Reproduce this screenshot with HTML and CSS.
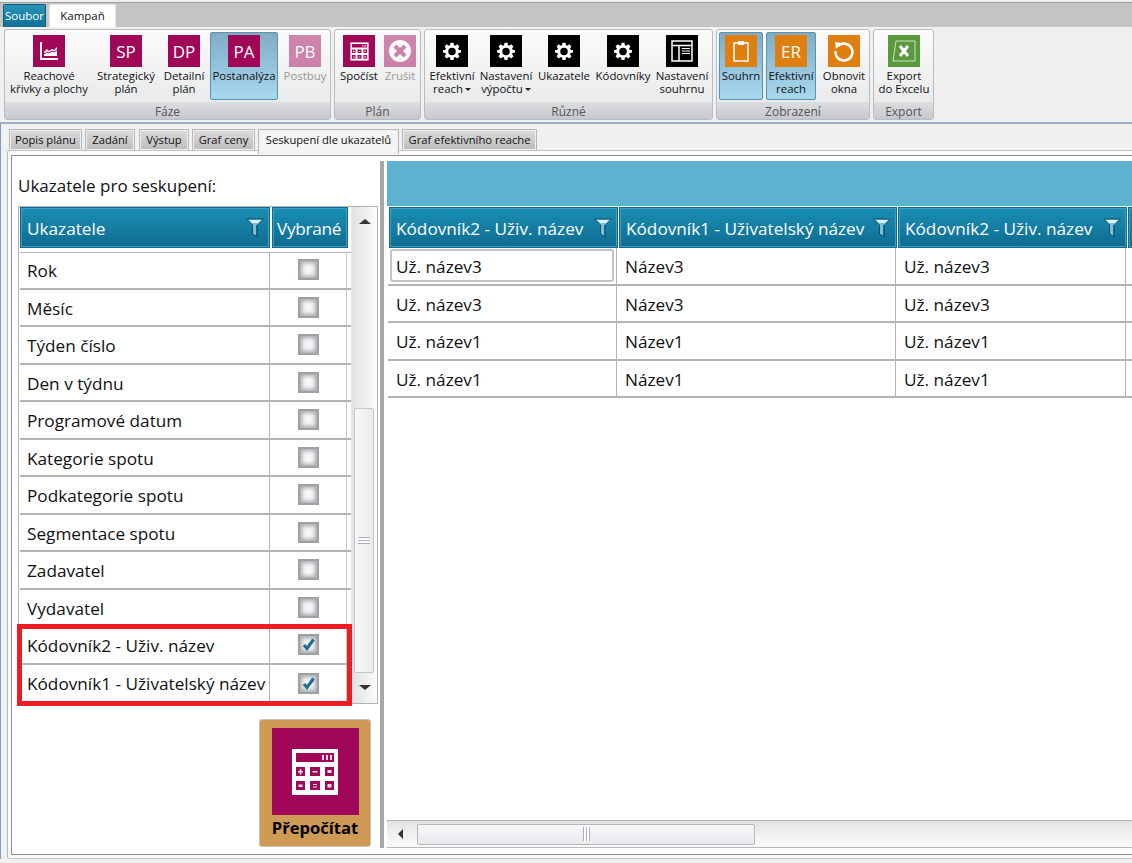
FILE: index.html
```html
<!DOCTYPE html>
<html lang="cs">
  <head>
    <meta charset="UTF-8" />
    <title>Seskupení dle ukazatelů</title>
    <link rel="stylesheet" href="styles.css">
  </head>
  <body>
    <svg class="defs" width="0" height="0">
      <symbol id="gear" viewBox="0 0 24 24">
        <path fill="#fff" fill-rule="evenodd" d="M10 1h4l.6 3.2 1.7.7L19 3l3 3-1.900 2.700.7 1.700L24 11v3l-3.200.6-.7 1.700L22 19l-3 3-2.700-1.900-1.700.7L14 24h-4l-.6-3.200-1.700-.7L5 22l-3-3 1.900-2.700-.7-1.700L0 14v-3l3.200-.6.7-1.700L2 6l3-3 2.700 1.900 1.700-.7zM12 7.500a5 5 0 1 0 0 10 5 5 0 0 0 0-10z"/>
      </symbol>
      <symbol id="funnel" viewBox="0 0 18 20">
        <path fill="#7cc0d4" stroke="#0b4f6c" d="M.5 1h17l-6 6v12l-5-3V7z"/>
        <path fill="#d8f4f8" d="M3 2h12l-3 3H6z"/>
        <path fill="#0f6b90" d="M10 7h1.500v11H10z"/>
      </symbol>
      <symbol id="calc" viewBox="0 0 48 48">
        <path fill="#fff" d="M1 1h46v46H1z"/>
        <path fill="#a10758" d="M5 5h38v9H5zM5 19h9v9H5zM19 19h10v9H19zM34 19h9v9h-9zM5 33h9v9H5zM19 33h10v9H19zM34 33h9v9h-9z"/>
        <path fill="#fff" d="M31 7h2v5h-2zM35 7h2v5h-2zM39 7h2v5h-2zM7 23h5v1.500H7zM8.700 21h1.600v5.500H8.700zM21.500 23h5v1.500h-5zM36.500 22h4v3h-4zM7.500 36.500h4v2.500h-4zM22 36h4v1h-4zM22 38.500h4v1h-4zM36.500 36h4v3.500h-4z" opacity=".85"/>
      </symbol>
    </svg>

    <div class="tabs-top">
      <div class="app-tab">Soubor</div>
      <div class="app-tab active">Kampaň</div>
    </div>

    <div class="ribbon">
      <section class="group group-faze">
        <div class="tools">
          <div class="tool w-reach">
            <span class="ico magenta">
              <svg width="18" height="18" viewBox="0 0 18 18"><path fill="none" stroke="#fff" stroke-width="2" d="M1 0v17h17"/><path fill="#fff" d="M4 10l3-3 2 2 3-2 2 1 3-3v9H4z"/><path fill="none" stroke="#a10758" d="M4 12l3-2 2 1 3-2 2 1 3-2"/></svg>
            </span>
            <span class="lbl">Reachové<br>křivky a plochy</span>
          </div>
          <div class="tool w-sp"><span class="ico magenta">SP</span><span class="lbl">Strategický<br>plán</span></div>
          <div class="tool w-dp"><span class="ico magenta">DP</span><span class="lbl">Detailní<br>plán</span></div>
          <div class="tool w-pa on"><span class="ico magenta">PA</span><span class="lbl">Postanalýza</span></div>
          <div class="tool w-pb off"><span class="ico magenta">PB</span><span class="lbl">Postbuy</span></div>
        </div>
        <div class="cap">Fáze</div>
      </section>

      <section class="group group-plan">
        <div class="tools">
          <div class="tool w-spo">
            <span class="ico magenta"><svg width="19" height="19"><use href="#calc"/></svg></span>
            <span class="lbl">Spočíst</span>
          </div>
          <div class="tool w-zru off">
            <span class="ico magenta">
              <svg width="24" height="24" viewBox="0 0 24 24"><circle cx="12" cy="12" r="11" fill="#fff"/><path stroke="#a10758" stroke-width="4" d="M7 7l10 10M17 7L7 17"/></svg>
            </span>
            <span class="lbl">Zrušit</span>
          </div>
        </div>
        <div class="cap">Plán</div>
      </section>

      <section class="group group-ruzne">
        <div class="tools">
          <div class="tool w-ef"><span class="ico black"><svg width="18" height="18"><use href="#gear"/></svg></span><span class="lbl">Efektivní<br>reach<i class="drop"></i></span></div>
          <div class="tool w-nv"><span class="ico black"><svg width="18" height="18"><use href="#gear"/></svg></span><span class="lbl">Nastavení<br>výpočtu<i class="drop"></i></span></div>
          <div class="tool w-uk"><span class="ico black"><svg width="18" height="18"><use href="#gear"/></svg></span><span class="lbl">Ukazatele</span></div>
          <div class="tool w-ko"><span class="ico black"><svg width="18" height="18"><use href="#gear"/></svg></span><span class="lbl">Kódovníky</span></div>
          <div class="tool w-ns">
            <span class="ico black">
              <svg width="22" height="22" viewBox="0 0 22 22"><path fill="none" stroke="#fff" stroke-width="1.500" d="M1 1h20v20H1zM1 5.500h20M8 5.500V21"/><path stroke="#fff" d="M11 8.500h8M11 11h8M11 13.500h8"/></svg>
            </span>
            <span class="lbl">Nastavení<br>souhrnu</span>
          </div>
        </div>
        <div class="cap">Různé</div>
      </section>

      <section class="group group-zobr">
        <div class="tools">
          <div class="tool w-so on">
            <span class="ico orange">
              <svg width="16" height="22" viewBox="0 0 16 22"><path fill="none" stroke="#fff" stroke-width="1.500" d="M5 3H1v18h14V3h-4"/><path fill="#fff" d="M5 1h6v4H5z"/></svg>
            </span>
            <span class="lbl">Souhrn</span>
          </div>
          <div class="tool w-er on"><span class="ico orange">ER</span><span class="lbl">Efektivní<br>reach</span></div>
          <div class="tool w-ob">
            <span class="ico orange">
              <svg width="22" height="22" viewBox="0 0 22 22"><path fill="none" stroke="#fff" stroke-width="2.500" d="M5 6a8.500 8.500 0 1 1-2.500 5"/><path fill="#fff" d="M2 2l7 1-6 6z"/></svg>
            </span>
            <span class="lbl">Obnovit<br>okna</span>
          </div>
        </div>
        <div class="cap">Zobrazení</div>
      </section>

      <section class="group group-export">
        <div class="tools">
          <div class="tool w-ex">
            <span class="ico green">
              <svg width="24" height="22" viewBox="0 0 24 22"><path fill="none" stroke="#cfe3c4" d="M4 1h19v20H1z"/><path stroke="#fff" stroke-width="3" d="M8 6l8 10M16 6L8 16"/></svg>
            </span>
            <span class="lbl">Export<br>do Excelu</span>
          </div>
        </div>
        <div class="cap">Export</div>
      </section>
    </div>

    <div class="workspace">
      <div class="doc-tabs">
        <div class="doc-tab">Popis plánu</div>
        <div class="doc-tab">Zadání</div>
        <div class="doc-tab">Výstup</div>
        <div class="doc-tab">Graf ceny</div>
        <div class="doc-tab active">Seskupení dle ukazatelů</div>
        <div class="doc-tab">Graf efektivního reache</div>
      </div>

      <div class="outer">
        <div class="frame">
          <div class="left">
            <div class="left-title">Ukazatele pro seskupení:</div>
            <div class="picker">
              <div class="picker-grid">
                <div class="head-row">
                  <div class="hcell hc-name">Ukazatele<svg class="funnel" width="18" height="20"><use href="#funnel"/></svg></div>
                  <div class="hcell hc-sel">Vybrané</div>
                </div>
                <div class="prow"><div class="pname">Rok</div><div class="pchk"><span class="chk"></span></div></div>
                <div class="prow"><div class="pname">Měsíc</div><div class="pchk"><span class="chk"></span></div></div>
                <div class="prow"><div class="pname">Týden číslo</div><div class="pchk"><span class="chk"></span></div></div>
                <div class="prow"><div class="pname">Den v týdnu</div><div class="pchk"><span class="chk"></span></div></div>
                <div class="prow"><div class="pname">Programové datum</div><div class="pchk"><span class="chk"></span></div></div>
                <div class="prow"><div class="pname">Kategorie spotu</div><div class="pchk"><span class="chk"></span></div></div>
                <div class="prow"><div class="pname">Podkategorie spotu</div><div class="pchk"><span class="chk"></span></div></div>
                <div class="prow"><div class="pname">Segmentace spotu</div><div class="pchk"><span class="chk"></span></div></div>
                <div class="prow"><div class="pname">Zadavatel</div><div class="pchk"><span class="chk"></span></div></div>
                <div class="prow"><div class="pname">Vydavatel</div><div class="pchk"><span class="chk"></span></div></div>
                <div class="prow"><div class="pname">Kódovník2 - Uživ. název</div><div class="pchk"><span class="chk"><svg width="15" height="15" viewBox="0 0 15 15"><path fill="none" stroke="#1f6f8f" stroke-width="3.200" d="M3 8l3 3.500L12.500 2.500"/></svg></span></div></div>
                <div class="prow"><div class="pname">Kódovník1 - Uživatelský název</div><div class="pchk"><span class="chk"><svg width="15" height="15" viewBox="0 0 15 15"><path fill="none" stroke="#1f6f8f" stroke-width="3.200" d="M3 8l3 3.500L12.500 2.500"/></svg></span></div></div>
              </div>
              <div class="vscroll">
                <div class="arrow-up"></div>
                <div class="vtrack"><div class="vthumb"><span class="grip-h"></span></div></div>
                <div class="arrow-down"></div>
              </div>
              <div class="red-box"></div>
            </div>
            <div class="calc-row">
              <div class="calc-btn">
                <span class="calc-img"><svg width="48" height="48"><use href="#calc"/></svg></span>
                <span class="calc-lbl">Přepočítat</span>
              </div>
            </div>
          </div>
          <div class="splitter"></div>
          <div class="right">
            <div class="band"></div>
            <div class="grid-wrap">
              <div class="ghead">
                <div class="hcell c1">Kódovník2 - Uživ. název<svg class="funnel" width="18" height="20"><use href="#funnel"/></svg></div>
                <div class="hcell c2">Kódovník1 - Uživatelský název<svg class="funnel" width="18" height="20"><use href="#funnel"/></svg></div>
                <div class="hcell c3">Kódovník2 - Uživ. název<svg class="funnel" width="18" height="20"><use href="#funnel"/></svg></div>
                <div class="hcell c4"></div>
              </div>
              <div class="grow"><div class="gcell c1 has-focus"><span class="focus">Už. název3</span></div><div class="gcell c2">Název3</div><div class="gcell c3">Už. název3</div></div>
              <div class="grow"><div class="gcell c1">Už. název3</div><div class="gcell c2">Název3</div><div class="gcell c3">Už. název3</div></div>
              <div class="grow"><div class="gcell c1">Už. název1</div><div class="gcell c2">Název1</div><div class="gcell c3">Už. název1</div></div>
              <div class="grow"><div class="gcell c1">Už. název1</div><div class="gcell c2">Název1</div><div class="gcell c3">Už. název1</div></div>
            </div>
            <div class="hscroll">
              <div class="arrow-left"></div>
              <div class="hthumb"><span class="grip-v"></span></div>
            </div>
          </div>
        </div>
      </div>
    </div>
  </body>
</html>
```

FILE: styles.css
```css
html, body {
  margin: 0;
  padding: 0;
  height: 863px;
  overflow: hidden;
}
body {
  background: #f0f0f0;
  font-family: "Open Sans", "Noto Sans", sans-serif;
  color: #111;
}
.defs {
  display: block;
  height: 0;
}

/* top tabs */
.tabs-top {
  height: 25px;
  margin-top: 2px;
  padding: 1px 0 0 3px;
  box-sizing: border-box;
  background: #c4c4c4;
  border-top: 1px solid #a0a0a0;
  display: flex;
  gap: 3px;
}
.app-tab {
  width: 43px;
  height: 23px;
  line-height: 22px;
  font-size: 11.5px;
  text-align: center;
  color: #fff;
  background: linear-gradient(#2a93b8, #0f6f95);
  border: 1px solid #0d5c7c;
  border-bottom: 0;
  box-sizing: border-box;
  border-radius: 2px 2px 0 0;
}
.app-tab.active {
  width: 67px;
  color: #111;
  background: #fff;
  border-color: #e4e4e4;
}

/* ribbon */
.ribbon {
  height: 97px;
  padding: 2px 0 0 4px;
  box-sizing: border-box;
  display: flex;
  gap: 3px;
  background: #f0f0f0;
  border-bottom: 2px solid #9db0c4;
}
.group {
  height: 91px;
  box-sizing: border-box;
  border: 1px solid #b9bdc0;
  border-radius: 3px;
  background: linear-gradient(#fbfbfb, #e4e6e7);
  display: flex;
  flex-direction: column;
}
.group-faze { width: 327px; }
.group-plan { width: 87px; }
.group-ruzne { width: 289px; }
.group-zobr { width: 154px; }
.group-export { width: 61px; }
.tools {
  height: 72px;
  display: flex;
  padding-top: 2px;
  box-sizing: border-box;
}
.cap {
  height: 17px;
  line-height: 19px;
  font-size: 12px;
  text-align: center;
  color: #555;
  background: linear-gradient(#dcdee0, #c6c9cc);
}
.tool {
  height: 68px;
  padding-top: 2px;
  box-sizing: border-box;
  display: flex;
  flex-direction: column;
  align-items: center;
  font-size: 11.4px;
  line-height: 13px;
  text-align: center;
  white-space: nowrap;
  border: 1px solid transparent;
  border-radius: 2px;
  flex: none;
}
.tool.on {
  background: linear-gradient(#80adc4, #a8d8f0);
  border-color: #5a93ae;
}
.tool.off { color: #9a9a9a; }
.tool.off .ico { opacity: 0.48; }
.ico {
  width: 32px;
  height: 32px;
  flex: none;
  display: flex;
  align-items: center;
  justify-content: center;
  color: #fff;
  font-size: 17px;
  margin-bottom: 2px;
}
.magenta { background: #a10758; }
.black { background: #000; }
.orange { background: #e07f10; }
.green { background: #5a9a3c; }
.lbl { display: block; }
.drop {
  display: inline-block;
  margin-left: 2px;
  vertical-align: middle;
  border: 3px solid transparent;
  border-top-color: #222;
  border-bottom: 0;
}
.w-reach { width: 88px; }
.w-sp { width: 56px; margin-left: 5px; }
.w-dp { width: 46px; margin-left: 7px; }
.w-pa { width: 68px; margin-left: 3px; }
.w-pb { width: 50px; margin-left: 2px; }
.w-spo { width: 42px; margin-left: 3px; }
.w-zru { width: 38px; margin-left: 1px; }
.w-ef { width: 48px; margin-left: 3px; }
.w-nv { width: 54px; margin-left: 3px; }
.w-uk { width: 54px; margin-left: 4px; }
.w-ko { width: 56px; margin-left: 4px; }
.w-ns { width: 56px; margin-left: 3px; }
.w-so { width: 44px; margin-left: 2px; }
.w-er { width: 50px; margin-left: 3px; }
.w-ob { width: 50px; margin-left: 3px; }
.w-ex { width: 56px; margin-left: 2px; }

/* document tabs */
.workspace {
  border-left: 1px solid #7f9bbd;
}
.doc-tabs {
  height: 26px;
  padding: 5px 0 0 8px;
  box-sizing: border-box;
  display: flex;
  gap: 3px;
  background: #f0f0f0;
}
.doc-tab {
  height: 21px;
  line-height: 20px;
  font-size: 11.2px;
  text-align: center;
  white-space: nowrap;
  background: linear-gradient(#dcdcdc, #bcbcbc);
  border: 1px solid #b8b8b8;
  border-bottom: 0;
  box-shadow: inset 0 0 0 1px #eee;
  box-sizing: border-box;
}
.doc-tab:nth-child(1) { width: 73px; }
.doc-tab:nth-child(2) { width: 50px; }
.doc-tab:nth-child(3) { width: 50px; margin-left: 1px; }
.doc-tab:nth-child(4) { width: 63px; }
.doc-tab:nth-child(5) { width: 141px; height: 25px; background: #f4f4f4; position: relative; z-index: 1; }
.doc-tab:nth-child(6) { width: 135px; }

/* main frame */
.outer {
  height: 709px;
  margin-left: 6px;
  padding: 4px 0 4px 3px;
  box-sizing: border-box;
  background: #fafafa;
  border-top: 1px solid #c4c4c4;
  border-left: 1px solid #b8b8b8;
  border-bottom: 1px solid #c4c4c4;
  border-radius: 3px 0 0 3px;
}
.frame {
  height: 700px;
  padding-top: 5px;
  box-sizing: border-box;
  background: #fff;
  border-top: 1px solid #8f8f8f;
  border-left: 1px solid #8f8f8f;
  border-bottom: 1px solid #8f8f8f;
  display: flex;
}
.left {
  width: 368px;
  flex: none;
  box-sizing: border-box;
  padding-left: 6px;
}
.left-title {
  height: 45px;
  padding-top: 14px;
  box-sizing: border-box;
  font-size: 17px;
  line-height: 22px;
  white-space: nowrap;
}
.picker {
  position: relative;
  width: 360px;
  height: 498px;
  box-sizing: border-box;
  display: flex;
  border: 1px solid #b4b4b4;
}
.picker-grid {
  width: 332px;
  flex: none;
  padding-left: 1px;
  box-sizing: border-box;
}
.head-row {
  display: flex;
  height: 45px;
  gap: 2px;
  border-bottom: 3px solid #fff;
  box-shadow: 0 1px 0 #b4b4b4;
  box-sizing: border-box;
  padding-right: 2px;
}
.hcell {
  position: relative;
  box-sizing: border-box;
  height: 41px;
  line-height: 41px;
  font-size: 17.2px;
  color: #fff;
  padding-left: 6px;
  background: linear-gradient(#1a8fb5, #0f6b90);
  outline: 1px solid #3f9cbc;
  outline-offset: -2px;
  border: 1px solid #0f6b90;
  white-space: nowrap;
}
.hc-name { width: 250px; }
.hc-sel { width: 76px; padding-left: 4px; letter-spacing: -0.3px; }
.funnel {
  position: absolute;
  right: 5px;
  top: 10px;
}
.prow {
  display: flex;
  height: 37.5px;
  box-sizing: border-box;
  border-bottom: 2px solid #b4b4b4;
}
.prow:last-child { border-bottom: 0; }
.pname {
  width: 250px;
  padding-left: 7px;
  box-sizing: border-box;
  font-size: 17.2px;
  line-height: 37px;
  white-space: nowrap;
  border-right: 1px solid #b4b4b4;
}
.pchk {
  width: 77px;
  box-sizing: border-box;
  display: flex;
  align-items: center;
  justify-content: center;
  border-right: 1px solid #c8c8c8;
}
.chk {
  width: 21px;
  height: 21px;
  box-sizing: border-box;
  border: 2px solid #a0a0a0;
  background: #f6f7f8;
  box-shadow: inset 0 0 4px 2px #a4a8ac;
  display: flex;
  align-items: center;
  justify-content: center;
}
.vscroll {
  width: 26px;
  flex: none;
  border-left: 1px solid #e6e6e6;
  box-sizing: border-box;
  background: linear-gradient(90deg, #dfe2e2, #fbfbfb);
  display: flex;
  flex-direction: column;
  align-items: center;
}
.arrow-up, .arrow-down {
  width: 0;
  height: 0;
  border: 5px solid transparent;
  border-left-width: 6px;
  border-right-width: 6px;
  flex: none;
}
.arrow-up {
  border-top: 0;
  border-bottom-color: #333;
  margin-top: 12px;
}
.arrow-down {
  border-bottom: 0;
  border-top-color: #333;
  margin-bottom: 13px;
}
.vtrack {
  flex: 1;
  align-self: stretch;
  padding-top: 184px;
  padding-bottom: 12px;
  box-sizing: border-box;
  display: flex;
}
.vthumb {
  width: 20px;
  margin-left: 2px;
  box-sizing: border-box;
  border: 1px solid #c4c6c8;
  border-radius: 2px;
  background: linear-gradient(90deg, #f6f7f8, #e8ebee);
  display: flex;
  align-items: center;
  justify-content: center;
}
.grip-h {
  width: 12px;
  height: 5px;
  border-top: 1px solid #a9b0b6;
  border-bottom: 1px solid #a9b0b6;
  background: linear-gradient(#fff 40%, #a9b0b6 40%, #a9b0b6 60%, #fff 60%);
}
.red-box {
  position: absolute;
  left: -2px;
  top: 417px;
  width: 335px;
  height: 82px;
  box-sizing: border-box;
  border: 5px solid #ed1c24;
}
.calc-row {
  display: flex;
  justify-content: flex-end;
  padding: 15px 9px 0 0;
}
.calc-btn {
  width: 112px;
  height: 128px;
  box-sizing: border-box;
  padding-top: 8px;
  background: #cf9a56;
  border: 1px solid #c8c0b4;
  border-radius: 3px;
  display: flex;
  flex-direction: column;
  align-items: center;
}
.calc-img {
  width: 87px;
  height: 87px;
  background: #a10758;
  display: flex;
  align-items: center;
  justify-content: center;
}
.calc-lbl {
  font-size: 16.6px;
  font-weight: 700;
  color: #000;
  line-height: 26px;
}
.splitter {
  width: 4px;
  flex: none;
  background: #a8a8a8;
  margin-bottom: 6px;
}
.right {
  flex: 1;
  min-width: 0;
  margin-left: 3px;
  margin-bottom: 6px;
  display: flex;
  flex-direction: column;
}
.band {
  height: 45px;
  flex: none;
  background: #5fb1d0;
}
.grid-wrap {
  flex: 1;
  min-height: 0;
  overflow: hidden;
  padding-left: 1px;
}
.ghead {
  display: flex;
  height: 42px;
  gap: 1px;
  padding: 1px 0 0 1px;
  box-sizing: border-box;
}
.ghead .c1 { width: 229px; flex: none; }
.ghead .c2 { width: 278px; flex: none; }
.ghead .c3 { width: 229px; flex: none; }
.ghead .c4 { width: 30px; flex: none; }
.grow {
  display: flex;
  height: 37.5px;
  width: 744px;
  box-sizing: border-box;
  border-bottom: 2px solid #b4b4b4;
}
.gcell {
  box-sizing: border-box;
  font-size: 17.2px;
  line-height: 37px;
  padding-left: 8px;
  border-right: 1px solid #b4b4b4;
  white-space: nowrap;
  flex: none;
}
.gcell.c1 { width: 229px; }
.gcell.c2 { width: 279px; }
.gcell.c3 { width: 230px; }
.gcell.has-focus { padding: 1px 2px 0; }
.focus {
  display: block;
  height: 33px;
  line-height: 31px;
  padding-left: 4px;
  box-sizing: border-box;
  border: 2px solid #c4c4c4;
  border-radius: 3px;
}
.hscroll {
  height: 28px;
  flex: none;
  box-sizing: border-box;
  border-top: 1px solid #b0b0b0;
  border-bottom: 1px solid #b8b8b8;
  background: linear-gradient(#e2e4e4, #fbfbfb);
  display: flex;
  align-items: center;
}
.arrow-left {
  width: 0;
  height: 0;
  margin-left: 11px;
  border: 5px solid transparent;
  border-right: 5px solid #333;
  border-left: 0;
}
.hthumb {
  width: 338px;
  height: 21px;
  margin-left: 14px;
  box-sizing: border-box;
  border: 1px solid #b4b6b8;
  border-radius: 2px;
  background: linear-gradient(#f6f7f8, #e8ebee);
  display: flex;
  align-items: center;
  justify-content: center;
}
.grip-v {
  width: 5px;
  height: 14px;
  border-left: 1px solid #a9b0b6;
  border-right: 1px solid #a9b0b6;
  background: linear-gradient(90deg, #fff 40%, #a9b0b6 40%, #a9b0b6 60%, #fff 60%);
}
```
